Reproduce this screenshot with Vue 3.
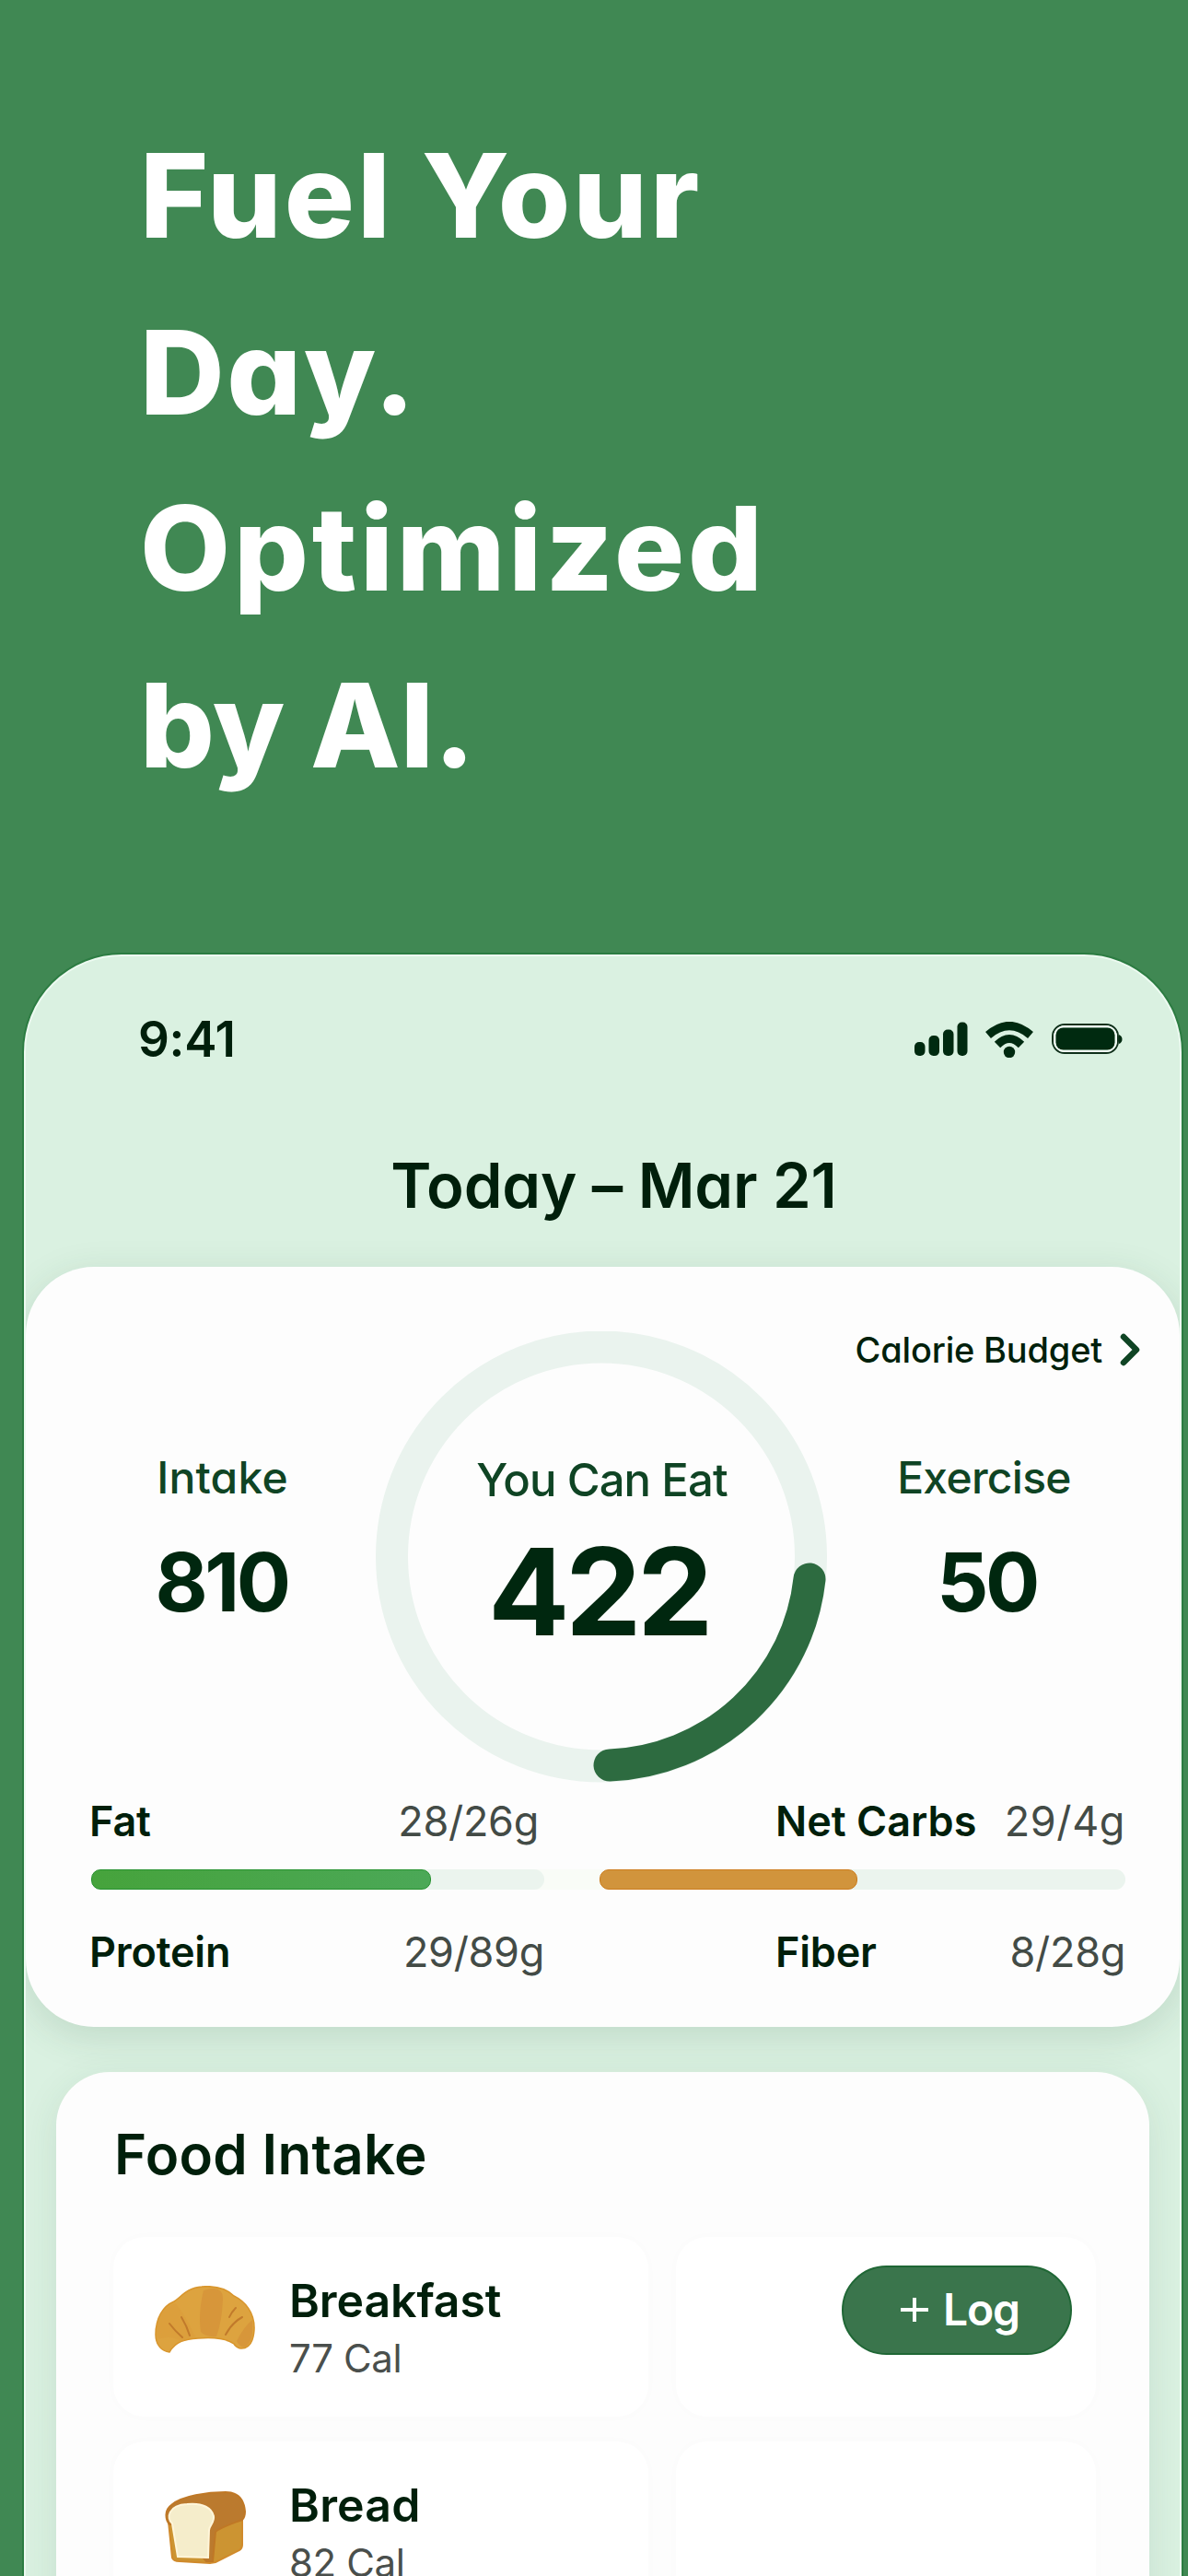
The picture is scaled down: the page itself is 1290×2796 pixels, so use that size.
<template>
  <main class="page">
    <h1 class="headline">
      <span v-for="line in headline" :key="line.text" :style="{ letterSpacing: line.spacing }">{{ line.text }}</span>
    </h1>

    <div class="phone">
      <div class="status-bar">
        <span class="time">9:41</span>
        <div class="status-icons">
          <svg width="58" height="38" viewBox="0 0 58 38" aria-hidden="true">
            <rect x="0" y="22" width="11.500" height="15" rx="5" />
            <rect x="15.500" y="15" width="11.500" height="22" rx="5" />
            <rect x="31" y="8.500" width="11.500" height="28.500" rx="5" />
            <rect x="46.500" y="0.500" width="11" height="36.500" rx="5" />
          </svg>
          <svg class="wifi" width="54" height="39" viewBox="0 0 54 39" aria-hidden="true">
            <path d="M4 14.500Q27-5.500 50 14.500" />
            <path d="M14 25Q27 12 40 25" />
            <circle cx="27" cy="33" r="6.200" />
          </svg>
          <svg class="battery" width="77" height="34" viewBox="0 0 77 34" aria-hidden="true">
            <rect class="battery-edge" x="1" y="1" width="71" height="31" rx="13" />
            <rect class="battery-gap" x="3" y="3" width="67" height="27" rx="11" />
            <rect x="4.500" y="4.500" width="64" height="24" rx="8" />
            <path d="M73 12q3.500 1.500 3.500 5t-3.500 5z" />
          </svg>
        </div>
      </div>

      <h2 class="date">Today – Mar 21</h2>

      <section class="card budget-card">
        <div class="summary">
          <div class="stat intake">
            <span class="stat-label">Intake</span>
            <span class="stat-value">810</span>
          </div>

          <div class="ring">
            <svg width="491" height="490" viewBox="0 0 491 490" aria-hidden="true">
              <circle class="ring-track" cx="245" cy="244.500" r="227.500" />
              <path class="ring-progress" d="M471 269A227 227 0 0 1 254 471" />
            </svg>
            <div class="ring-text">
              <span class="ring-label">You Can Eat</span>
              <span class="ring-value">422</span>
            </div>
          </div>

          <div class="stat exercise">
            <a class="budget-link">
              Calorie Budget
              <svg width="22" height="36" viewBox="0 0 22 36" aria-hidden="true">
                <path d="M4 4l14 14L4 32" />
              </svg>
            </a>
            <span class="stat-label narrow">Exercise</span>
            <span class="stat-value burned">50</span>
          </div>
        </div>

        <div class="macro-row">
          <div class="macro fat"><b>Fat</b><span>28/26g</span></div>
          <div class="macro right"><b class="wide">Net Carbs</b><span class="wider">29/4g</span></div>
        </div>
        <div class="bars">
          <div class="bar"><div class="fill green" :style="{ width: '75%' }"></div></div>
          <div class="bar"><div class="fill orange" :style="{ width: '49%' }"></div></div>
        </div>
        <div class="macro-row">
          <div class="macro"><b>Protein</b><span>29/89g</span></div>
          <div class="macro right"><b>Fiber</b><span>8/28g</span></div>
        </div>
      </section>

      <section class="card food-card">
        <h3>Food Intake</h3>
        <div class="food-grid">
          <div class="tile">
            <svg class="food-icon croissant" width="110" height="74" viewBox="0 0 110 74" aria-hidden="true">
              <path class="crust" d="M16 72C8 71 1 65 1 53C1 35 9 22 21 17C29 12 35 2 51 1C68-.5 79 4 86 11C98 17 109 29 108 48C107 62 102 68 94 68C90 68 88 66 86 63C76 56 59 56 47 57C33 58 23 60 16 72Z" />
              <path class="shade" d="M53 5Q75-2 74 15Q73 39 67 55Q55 56 50 50Q47 29 53 5Z" />
              <path class="shade" d="M106 37Q97 44 89 60Q93 68 99 66Q108 59 106 37Z" />
              <path class="shade light" d="M22 19Q31 28 44 55Q38 57 29 61Q20 53 3 58Q-2 28 22 19Z" />
              <path class="crease" d="M16 41Q22 49 30 56M29 34Q35 44 38 54M95 34Q84 40 77 53M88 24Q83 29 81 34" />
            </svg>
            <div class="food-text">
              <span class="food-name">Breakfast</span>
              <span class="food-cal">77 Cal</span>
            </div>
          </div>
          <div class="tile action">
            <button type="button" class="log-button">
              <svg width="32" height="28" viewBox="0 0 32 28" aria-hidden="true">
                <path d="M1 14h30M16 1v26" />
              </svg>
              Log
            </button>
          </div>
          <div class="tile">
            <svg class="food-icon bread" width="110" height="80" viewBox="0 0 110 80" aria-hidden="true">
              <path class="side" d="M15 33L19 72Q20 76 27 76L60 78L66 77L92 64Q95 62 95 58L95 24Z" />
              <path class="top" d="M16 36C11 30 11 20 18 15C29 5 58 1 77 1C91 1 97 10 98 22Q98 28 95 31C84 35 72 39 66 44L63 76H56L20 36Z" />
              <path class="slice" d="M19 35C12 29 15 15 35 14C53 12 62 19 64 27C65 34 60 36 59 42L58 72L25 71Z" />
            </svg>
            <div class="food-text">
              <span class="food-name bread-name">Bread</span>
              <span class="food-cal">82 Cal</span>
            </div>
          </div>
          <div class="tile"></div>
        </div>
      </section>
    </div>
  </main>
</template>

<script setup>
const headline = [
  { text: 'Fuel Your', spacing: '3px' },
  { text: 'Day.', spacing: '2.5px' },
  { text: 'Optimized', spacing: '3.8px' },
  { text: 'by AI.', spacing: '0px' }
]
</script>

<style>
body {
  margin: 0;
}
</style>

<style scoped>
* {
  box-sizing: border-box;
}

.page {
  width: 1290px;
  height: 2796px;
  overflow: hidden;
  padding: 117px 0 0 26px;
  background: #408853;
  font-family: Inter, "Liberation Sans", sans-serif;
  color: #001f0b;
}

.headline {
  display: flex;
  flex-direction: column;
  height: 919px;
  margin: 0;
  padding-left: 126px;
  font-size: 127px;
  font-weight: 800;
  line-height: 191.5px;
  font-feature-settings: "cv11";
  color: #fff;
  white-space: nowrap;
}

.phone {
  width: 1257px;
  height: 1830px;
  overflow: hidden;
  border: 2px solid #edfaf1;
  border-radius: 106px 106px 0 0;
  background: #daf1e1;
  box-shadow: 0 0 0 2px #2c7c42;
}

.status-bar {
  display: flex;
  justify-content: space-between;
  align-items: center;
  height: 100px;
  margin-top: 40px;
  padding: 0 62px 0 122px;
}

.time {
  font-size: 53px;
  font-weight: 600;
  letter-spacing: -0.3px;
}

.status-icons {
  display: flex;
  align-items: center;
  gap: 18px;
  fill: #002a10;
}

.wifi path {
  fill: none;
  stroke: #002a10;
  stroke-width: 9;
}

.battery {
  margin-left: 1px;
}

.battery-edge {
  fill: none;
  stroke: #10301b;
  stroke-width: 2;
}

.battery-gap {
  fill: none;
  stroke: #f1fbf4;
  stroke-width: 2;
}

.date {
  margin: 69px 0 48px;
  padding-left: 24px;
  font-size: 67px;
  font-weight: 600;
  line-height: 80px;
  letter-spacing: -0.2px;
  text-align: center;
  font-feature-settings: "cv11";
}

.card {
  background: #fdfdfd;
}

.budget-card {
  height: 825px;
  padding-top: 70px;
  border-radius: 74px;
  box-shadow: 0 10px 40px rgba(40, 80, 55, 0.15);
}

.summary {
  display: grid;
  grid-template-columns: 380px 491px 1fr;
}

.stat {
  display: flex;
  flex-direction: column;
  align-items: center;
}

.intake {
  padding: 129px 0 0 47px;
  font-feature-settings: "cv11";
}

.exercise {
  padding-right: 43px;
}

.stat-label {
  font-size: 48px;
  font-weight: 500;
  line-height: 60px;
  letter-spacing: 0.2px;
  color: #0f4424;
}

.narrow {
  letter-spacing: -0.7px;
}

.stat-value {
  margin-top: 33px;
  padding-right: 2px;
  font-size: 88px;
  font-weight: 700;
  line-height: 100px;
  letter-spacing: -3.6px;
  color: #00270f;
}

.burned {
  padding: 0 0 0 6px;
}

.ring {
  position: relative;
  height: 490px;
}

.ring svg {
  display: block;
  fill: none;
}

.ring-track {
  stroke: #eaf3ee;
  stroke-width: 35;
}

.ring-progress {
  stroke: #2d6b40;
  stroke-width: 35;
  stroke-linecap: round;
}

.ring-text {
  position: absolute;
  inset: 132px 0 auto;
  display: flex;
  flex-direction: column;
  align-items: center;
}

.ring-label {
  font-size: 49px;
  font-weight: 500;
  line-height: 60px;
  letter-spacing: -0.9px;
  color: #0f4424;
}

.ring-value {
  margin-top: 26px;
  padding-right: 7px;
  font-size: 131px;
  font-weight: 700;
  line-height: 130px;
  letter-spacing: -4.6px;
  color: #00270f;
}

.budget-link {
  display: flex;
  align-items: center;
  align-self: flex-end;
  gap: 19px;
  margin-bottom: 89px;
  font-size: 38px;
  font-weight: 500;
  line-height: 40px;
  letter-spacing: -0.2px;
  font-feature-settings: "cv11";
  white-space: nowrap;
}

.budget-link svg {
  fill: none;
  stroke: #0f4424;
  stroke-width: 6.5;
  stroke-linecap: round;
  stroke-linejoin: round;
}

.macro-row {
  display: grid;
  grid-template-columns: 494px 631px;
  margin-top: 17px;
  padding-left: 69px;
}

.macro {
  display: flex;
  justify-content: space-between;
  font-size: 45px;
  line-height: 50px;
}

.macro.right {
  padding-left: 251px;
}

.fat {
  padding-right: 6px;
}

.macro b {
  font-weight: 600;
  letter-spacing: -0.2px;
}

.macro span {
  color: #434b46;
  letter-spacing: -0.3px;
}

.macro .wide {
  letter-spacing: 0px;
}

.macro .wider {
  letter-spacing: 0.6px;
}

.bars {
  display: flex;
  gap: 60px;
  width: 1123px;
  margin: 27px 0 43px 71px;
  border-radius: 11px;
  background: #f9fcf7;
}

.bars + .macro-row {
  margin-top: 0;
}

.bar {
  width: 492px;
  height: 22px;
  border-radius: 11px;
  background: #ebf4ee;
}

.bar + .bar {
  width: 571px;
}

.fill {
  height: 100%;
  border-radius: 10px;
}

.green {
  border: 1px solid #26912f;
  background: linear-gradient(90deg, #46a33c, #4ba857);
}

.orange {
  border: 1px solid #cc7c1c;
  background: #d1943c;
}

.food-card {
  width: 1187px;
  height: 640px;
  margin: 49px 0 0 33px;
  padding: 54px 0 0 62px;
  border-radius: 58px;
  box-shadow: 0 10px 40px rgba(40, 80, 55, 0.1);
}

.food-card h3 {
  margin: 0 0 55px 1px;
  font-size: 60px;
  font-weight: 600;
  line-height: 70px;
  letter-spacing: 0.3px;
}

.food-grid {
  display: grid;
  grid-template-columns: 581px 456px;
  grid-auto-rows: 195px;
  gap: 27px 30px;
}

.tile {
  display: flex;
  padding-left: 45px;
  border-radius: 34px;
  background: #fff;
  box-shadow: 0 0 14px rgba(0, 0, 0, 0.014);
}

.food-icon {
  flex: none;
  margin-top: 53px;
}

.bread {
  margin-top: 54px;
}

.food-text {
  display: flex;
  flex-direction: column;
  padding: 39px 0 0 36px;
}

.food-name {
  font-size: 50px;
  font-weight: 600;
  line-height: 60px;
  letter-spacing: -0.1px;
}

.bread-name {
  letter-spacing: 0.2px;
}

.food-cal {
  margin-top: 8px;
  font-size: 42px;
  line-height: 50px;
  letter-spacing: -0.4px;
  color: #4a4f4c;
}

.crust {
  fill: #dda33f;
  stroke: #d8952c;
  stroke-width: 1.5;
}

.shade {
  fill: #d7963a;
}

.light {
  fill: #dc9b3a;
  opacity: 0.45;
}

.crease {
  fill: none;
  stroke: #c17a2b;
  stroke-width: 2;
  stroke-linecap: round;
}

.side {
  fill: #cc9432;
  stroke: #d08a2b;
  stroke-width: 2;
}

.top {
  fill: #bb7a2e;
  stroke: #bf7826;
  stroke-width: 2;
}

.slice {
  fill: #f5edcb;
  stroke: #fff6da;
  stroke-width: 2;
}

.action {
  justify-content: flex-end;
  align-items: flex-start;
  padding: 31px 26px 0 0;
}

.log-button {
  display: flex;
  align-items: center;
  justify-content: center;
  gap: 15px;
  width: 250px;
  height: 97px;
  padding: 0 0 2px 6px;
  border: 2px solid #1f6735;
  border-radius: 49px;
  background: #3a754c;
  color: #fff;
  font-family: inherit;
  font-size: 48px;
  font-weight: 600;
  letter-spacing: -1.2px;
}

.log-button svg {
  fill: none;
  stroke: #fff;
  stroke-width: 4;
}
</style>
